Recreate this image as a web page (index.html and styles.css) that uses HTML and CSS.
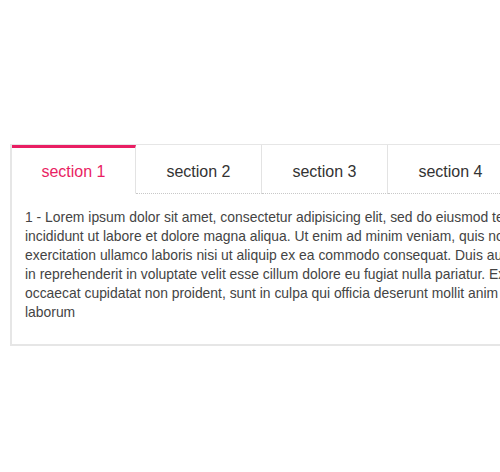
FILE: index.html
```html
<!DOCTYPE html>
<html>
<head>
<meta charset="utf-8">
<link rel="stylesheet" href="styles.css">
</head>
<body>
<div class="tabs">
  <div class="tab-bar">
    <div class="tab active">section 1</div>
    <div class="tab">section 2</div>
    <div class="tab">section 3</div>
    <div class="tab">section 4</div>
  </div>
  <div class="panel">
    <p>1 - Lorem ipsum dolor sit amet, consectetur adipisicing elit, sed do eiusmod tempor incididunt ut labore et dolore magna aliqua. Ut enim ad minim veniam, quis nostrud exercitation ullamco laboris nisi ut aliquip ex ea commodo consequat. Duis aute irure dolor in reprehenderit in voluptate velit esse cillum dolore eu fugiat nulla pariatur. Excepteur sint occaecat cupidatat non proident, sunt in culpa qui officia deserunt mollit anim id est laborum</p>
  </div>
</div>
</body>
</html>
```
FILE: styles.css
```css
html, body {
  margin: 0;
  padding: 0;
  overflow: hidden;
  background: #fff;
}
body {
  width: 500px;
  height: 472px;
  padding: 144px 0 0 10px;
  box-sizing: border-box;
  font-family: "Liberation Sans", Arial, sans-serif;
}
.tabs {
  width: 600px;
  border: 1px solid #e6e6e6;
  border-width: 1px 2px 2px 2px;
  box-sizing: border-box;
}
.tab-bar {
  display: flex;
}
.tab {
  flex: 0 0 auto;
  width: 126px;
  height: 49px;
  box-sizing: border-box;
  display: flex;
  align-items: center;
  justify-content: center;
  font-size: 16px;
  color: #333;
  border-right: 1px solid #e3e3e3;
  border-bottom: 1px dotted #c8c8c8;
  padding-top: 5px;
}
.tab:first-child {
  width: 124px;
}
.tab.active {
  color: #e91e63;
  border-top: 3px solid #e91e63;
  border-bottom-color: transparent;
  padding-top: 2px;
}
.panel {
  padding: 14px 14px 22px 13px;
}
.panel p {
  margin: 0;
  width: 557px;
  font-size: 13.9px;
  line-height: 19px;
  color: #444;
}
```
